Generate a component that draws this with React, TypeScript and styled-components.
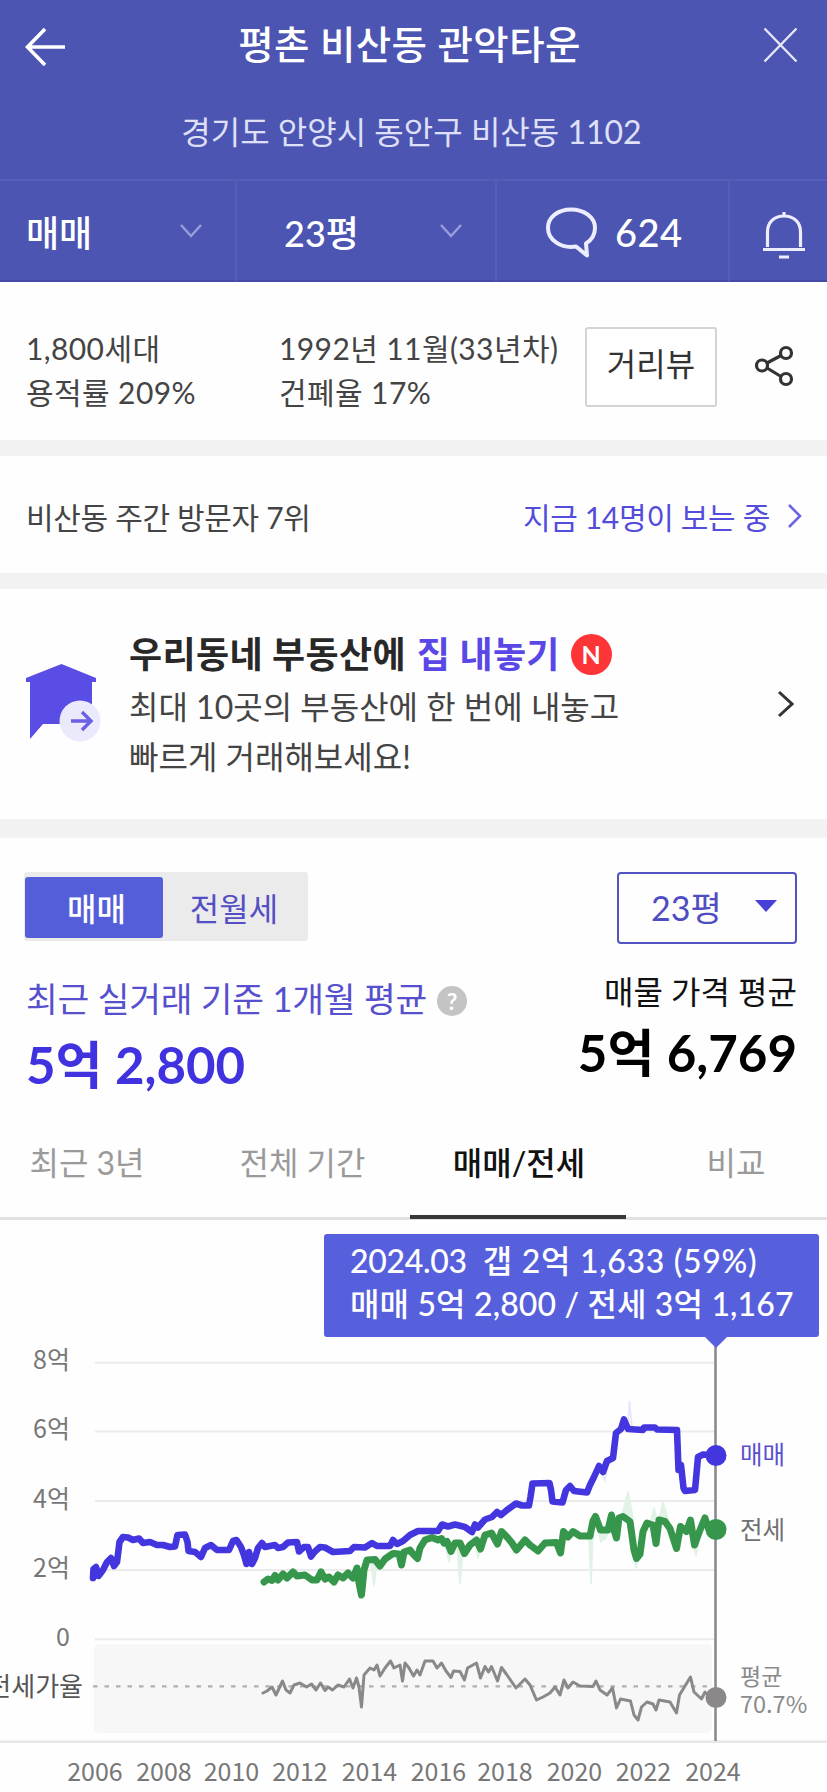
import React from "react";
import styled, { createGlobalStyle } from "styled-components";

const Global = createGlobalStyle`
  * { box-sizing: border-box; }
  body {
    margin: 0;
    background: #fefefe;
    font-family: Lato, "Noto Sans CJK KR", sans-serif;
    color: #444;
  }
`;

const Page = styled.main`
  width: 827px;
  height: 1792px;
  overflow: hidden;
  display: flex;
  flex-direction: column;
  background: #fefefe;
  white-space: nowrap;
`;

const Header = styled.header`
  height: 282px;
  flex: none;
  background: #4c55b2;
  color: #fff;
  border-bottom: 2px solid #444ba6;
`;

const TitleRow = styled.div`
  height: 90px;
  display: flex;
  align-items: center;
  justify-content: space-between;
  padding: 0 29px 0 25px;
`;

const Title = styled.h1`
  margin: 0 9px 2px 0;
  font-size: 38.5px;
  line-height: 50px;
  font-weight: 500;
  letter-spacing: 0.4px;
`;

const Address = styled.div`
  height: 89px;
  display: flex;
  align-items: center;
  justify-content: center;
  padding-bottom: 9px;
  padding-right: 4px;
  font-size: 32px;
  color: #dfe0f8;
`;

const FilterBar = styled.div`
  height: 102px;
  display: grid;
  grid-template-columns: 237px 260px 233px 97px;
  border-top: 2px solid #565eb8;
`;

const Filter = styled.div<{ $start: number; $end?: number }>`
  display: flex;
  align-items: center;
  justify-content: space-between;
  padding: 0 ${(p) => p.$end ?? 0}px 0 ${(p) => p.$start}px;
  font-size: 36px;
  font-weight: 500;
  border-right: 2px solid #555db7;
  &:last-child {
    border-right: 0;
  }
`;

const FilterIcon = styled.svg<{ $drop: number }>`
  margin-top: ${(p) => p.$drop}px;
  flex: none;
`;

const Count = styled.span`
  flex: 1;
  padding: 2px 0 0 17px;
  font-size: 38px;
  letter-spacing: 0.4px;
`;

const Gap = styled.div<{ $h: number }>`
  height: ${(p) => p.$h}px;
  flex: none;
  background: #f2f2f2;
`;

const Info = styled.section`
  height: 158px;
  flex: none;
  display: flex;
  align-items: flex-start;
  padding: 45px 0 0 26px;
  font-size: 30px;
  line-height: 44px;
`;

const InfoColumn = styled.div<{ $w: number }>`
  width: ${(p) => p.$w}px;
  margin-top: -1px;
  letter-spacing: 0.4px;
`;

const StreetButton = styled.button`
  width: 132px;
  height: 80px;
  padding: 0 0 6px;
  border: 2px solid #d4d4d4;
  border-radius: 3px;
  background: #fff;
  color: #333;
  font: inherit;
  font-size: 32px;
`;

const ShareIcon = styled.svg`
  margin: 17px 0 0 36px;
`;

const Visitors = styled.section`
  height: 117px;
  flex: none;
  display: flex;
  align-items: center;
  justify-content: space-between;
  padding: 2px 25px 0 26px;
  font-size: 30px;
  letter-spacing: -0.33px;
`;

const Viewing = styled.span`
  display: flex;
  align-items: center;
  gap: 17px;
  color: #544cdb;
`;

const Promo = styled.section`
  height: 230px;
  flex: none;
  display: flex;
  align-items: flex-start;
  padding: 40px 33px 0 26px;
`;

const PromoIcon = styled.svg`
  margin: 34px 28px 0 0;
  flex: none;
`;

const PromoBody = styled.div`
  flex: 1;
  font-size: 32px;
  line-height: 50px;
`;

const PromoTitle = styled.h2`
  margin: 0;
  display: flex;
  align-items: center;
  font-size: 36px;
  line-height: 50px;
  font-weight: 700;
  letter-spacing: 0.35px;
  color: #282828;
  padding-bottom: 3px;
  height: 53px;
`;

const Accent = styled.span`
  color: #5a48e6;
  margin-left: 11px;
`;

const NewBadge = styled.span`
  width: 41px;
  height: 41px;
  margin-left: 11px;
  border-radius: 50%;
  background: #fd3536;
  color: #fff;
  font-size: 25px;
  line-height: 41px;
  text-align: center;
`;

const PromoArrow = styled.svg`
  margin-top: 61px;
`;

const Price = styled.section`
  height: 297px;
  flex: none;
  padding: 34px 30px 0 24px;
`;

const Line = styled.div`
  display: flex;
  justify-content: space-between;
  align-items: flex-start;
`;

const Toggle = styled.div`
  width: 284px;
  height: 69px;
  padding: 5px 0 3px 1px;
  display: flex;
  background: #ebebec;
  border-radius: 3px;
  font-size: 32px;
`;

const ToggleItem = styled.div<{ $active?: boolean }>`
  width: ${(p) => (p.$active ? 138 : 144)}px;
  padding: 0 ${(p) => (p.$active ? 0 : 2)}px 1px ${(p) => (p.$active ? 5 : 0)}px;
  display: flex;
  align-items: center;
  justify-content: center;
  border-radius: 3px;
  background: ${(p) => (p.$active ? "#555ed9" : "transparent")};
  color: ${(p) => (p.$active ? "#fff" : "#544fc4")};
  font-weight: ${(p) => (p.$active ? 500 : 400)};
`;

const Select = styled.div`
  width: 180px;
  height: 72px;
  display: flex;
  align-items: center;
  justify-content: space-between;
  padding: 0 18px 4px 32px;
  border: 2px solid #5055c0;
  border-radius: 4px;
  color: #4f4dc4;
  font-size: 34px;
`;

const Average = styled.div<{ $right?: boolean }>`
  display: flex;
  flex-direction: column;
  align-items: ${(p) => (p.$right ? "flex-end" : "flex-start")};
  padding-top: ${(p) => (p.$right ? 28 : 35)}px;
  padding-left: ${(p) => (p.$right ? 0 : 2)}px;
  color: ${(p) => (p.$right ? "#111" : "#5650cf")};
  font-size: ${(p) => (p.$right ? 32 : 34.5)}px;
  line-height: 40px;
`;

const AverageLabel = styled.div<{ $track?: number }>`
  display: flex;
  align-items: center;
  gap: 10px;
  letter-spacing: ${(p) => p.$track ?? 0}px;
`;

const Help = styled.span`
  width: 30px;
  height: 30px;
  margin-top: 3px;
  border-radius: 50%;
  background: #c4c4c4;
  color: #fff;
  font-size: 23px;
  line-height: 30px;
  font-weight: 700;
  text-align: center;
`;

const Amount = styled.strong<{ $blue?: boolean }>`
  margin-top: ${(p) => (p.$blue ? 16 : 11)}px;
  font-size: 51px;
  line-height: 60px;
  font-weight: 700;
  color: ${(p) => (p.$blue ? "#4033df" : "#000")};
`;

const Tabs = styled.nav`
  height: 85px;
  flex: none;
  display: grid;
  grid-template-columns: 195px 215px 216px 201px;
  border-bottom: 3px solid #e2e2e2;
  font-size: 32px;
`;

const Tab = styled.div<{ $active?: boolean; $left?: number; $right?: number }>`
  display: flex;
  align-items: flex-start;
  justify-content: center;
  height: 84px;
  padding: 6px ${(p) => p.$right ?? 0}px 0 ${(p) => p.$left ?? 0}px;
  line-height: 44px;
  color: ${(p) => (p.$active ? "#111" : "#9a9a9a")};
  font-weight: ${(p) => (p.$active ? 500 : 400)};
  border-bottom: 4px solid ${(p) => (p.$active ? "#3a3738" : "transparent")};
`;

const ChartArea = styled.section`
  position: relative;
  height: 572px;
  flex: none;
`;

const Tooltip = styled.div`
  position: absolute;
  left: 324px;
  top: 14px;
  width: 495px;
  height: 103px;
  padding: 5px 0 0 26px;
  border-radius: 3px;
  background: #5760dc;
  color: #fff;
  font-size: 32px;
  line-height: 43px;
  font-weight: 500;
  &::after {
    content: "";
    position: absolute;
    left: 380px;
    top: 102px;
    border: 12px solid transparent;
    border-top-color: #5760dc;
    border-bottom: 0;
  }
`;

const TooltipLine = styled.div`
  display: flex;
  gap: 16px;
  letter-spacing: 0.15px;
`;

const TooltipDate = styled.span`
  letter-spacing: -0.3px;
`;

const TooltipGap = styled.span`
  letter-spacing: 0.7px;
`;

const ChartSvg = styled.svg`
  display: block;
  font-family: "Noto Sans CJK KR", sans-serif;
  font-size: 25px;
  fill: #777;
`;

const Chevron = ({ color, w, h, stroke }: { color: string; w: number; h: number; stroke: number }) => (
  <svg width={w} height={h} fill="none" stroke={color} strokeWidth={stroke}>
    <path d={`M2 2L${w - 2} ${h / 2}L2 ${h - 2}`} />
  </svg>
);

const DownChevron = () => (
  <svg width="24" height="16" fill="none" stroke="#9a9edb" strokeWidth="2.4">
    <path d="M2 2L12 13L22 2" />
  </svg>
);

const salePoints =
  "93,1578 93.5,1569 96,1567 98.5,1576 103,1570 107,1562 111,1558 114,1566 117,1562 119.5,1542 123,1537 128,1537.5 133,1540 139,1538.5 143,1543 150,1542 157,1545 163,1545 170,1547 175,1546.5 177.5,1535 185,1534.5 187.5,1542 188.5,1551 195,1552 201,1557 205,1548 211,1545 217,1550 229,1550 233,1541 236.5,1540 241,1547 244,1555 246.5,1564 249,1552 252,1564 255,1558 258,1548 262,1543 265,1547 275,1545 278,1548 283,1547 288,1542.5 297,1542 299,1551.5 304,1547 308,1547 311,1556.5 315,1551.5 320,1547 325,1547.5 333,1552 350,1551 354,1547 365,1547.5 372,1543 377,1546 390,1546 393,1540 397,1544 403,1541 410,1535 418,1531 438,1531 442,1524.5 448,1526.5 455,1524.5 465,1527 472,1532 475,1524.5 478,1527.5 485,1519.5 492,1517 497,1512 501,1515 507,1510 516,1503.5 522,1505.5 529,1505.5 530.5,1497 532.5,1483.5 549.5,1483 551,1490 552.5,1501.5 562.5,1502.5 566,1490 570,1486 574,1491 587,1492.5 590,1485 594,1477 599,1466 603,1472 607,1461 613,1458 616,1433 621,1429 624,1419.5 628,1429 643,1430 644,1427.5 655,1427.5 657,1429.5 677,1430 678.5,1470 681,1465 683.5,1488 685,1491 695,1490 698,1457 703,1454.5 715.5,1455.5";

const leasePoints =
  "264,1582 268,1579 272,1580.5 275,1575.5 278,1580 283,1574 287,1578 293,1572 297,1576 305,1575 312,1580 317,1580 321,1572 325,1579 329,1577 334,1582 338,1575 343,1578 348,1573 353,1578 357,1568 359,1583 361.5,1595 364,1570 367,1560 375,1559.5 380,1566 385,1559 393,1553.5 399,1554 401.5,1565 404,1552 410,1550 413,1554 417.5,1558.5 420,1548 425,1540 432,1537.5 438,1540 441.5,1538.5 444,1543 447,1541.5 451,1551.5 455,1543 460,1543 464.5,1553.5 470,1545 476.5,1540 480.5,1549 485,1535 491.5,1533 497.5,1544 501.5,1531.5 507,1537 512,1543 516.5,1550 525,1540 530,1545 538,1551 545,1543 556.5,1542.5 560.5,1553 563.5,1531.5 568,1537 573,1531.5 580,1536 590,1536 593,1521 595.5,1516.5 600.5,1530 608,1530 611.5,1515 614,1530 616.5,1538 619,1518 623,1516.5 630,1521.5 634,1550 636.5,1558.5 640,1554 643,1531.5 647,1523 653,1525 656,1543.5 659,1520 665,1521.5 670,1528.5 676.5,1548.5 680.5,1526.5 686.5,1531.5 690.5,1520 694.5,1545 699,1532.5 705,1518 709,1530 715.5,1529";

const ratioPoints =
  "263,1693 267,1691 272,1687 276,1695 282.5,1681 286,1690 290,1693 294,1685 300,1683 306.5,1687 311.5,1684 316,1690 320.5,1683 325,1690.5 328,1687 332.5,1690 338,1685 344,1687 349.5,1679 353,1688 356.5,1678 359,1687 361.5,1707 364,1675 370,1668 374,1670 377,1665 380,1676 385,1668 390.5,1661 394,1668 400,1665 402.5,1681 405,1663 409,1668 413.5,1676 417,1670 420,1675 425,1661 433,1661 437,1668 441.5,1663 446,1671 451,1677.5 453.5,1671 460,1671.5 464.5,1680 467.5,1668 476.5,1663 480.5,1678 485,1666.5 488.5,1672 491.5,1666.5 497.5,1681 501.5,1667.5 507,1675 516,1688 525,1679 530,1685 536.5,1700 543,1697 550,1693 555,1687 560,1695 564,1680 568,1688 573,1682 580,1686 593,1686.5 596,1681 600,1690 607,1695 612.5,1688 616.5,1708 620.5,1699 630.5,1701 634,1715 638,1720 641.5,1707 647,1702 653,1704 656,1710 659,1700 670,1702 676.5,1713 679.5,1695 690.5,1677 694,1692 701.5,1699 705,1692 710,1697 715.5,1697.5";

const gridLines = [
  { label: "8억", y: 1362.7 },
  { label: "6억", y: 1431.5 },
  { label: "4억", y: 1501 },
  { label: "2억", y: 1570 },
  { label: "0", y: 1639.3 },
];

const years = [
  [2006, 95], [2008, 164], [2010, 231.5], [2012, 300], [2014, 369.5],
  [2016, 438.5], [2018, 505], [2020, 574.5], [2022, 643.5], [2024, 713],
];

const Chart = () => (
  <ChartSvg width="827" height="572" viewBox="0 1220 827 572">
    <rect x="94" y="1644" width="618" height="89" rx="5" fill="#f7f7f7" />
    {gridLines.map(({ label, y }) => (
      <g key={label}>
        <path d={`M95 ${y}H715`} stroke="#ebebeb" strokeWidth="2" />
        <text x="70" y={y + 6.5} textAnchor="end">{label}</text>
      </g>
    ))}
    <path d="M93 1686.3H711" stroke="#b0b0b0" strokeWidth="2.2" strokeDasharray="4.5 7" />
    <path d="M0 1741.7H827" stroke="#e6e6e8" strokeWidth="2.4" />
    <path
      d="M371 1562L374 1586L377 1562M445 1545L449 1562L452 1548M457 1545L460 1584L463 1550M476 1547L478 1558L481 1548M589 1538L591 1584L593 1532M598 1530L601 1542L606 1538L609 1530M622 1515L628 1492L633 1518M633 1550L636 1568L639 1555M651 1520L654 1508L657 1520M659 1520L663 1502L669 1522M692 1540L696 1556L699 1538"
      fill="#e1f2e6" stroke="#e1f2e6" strokeWidth="1.6"
    />
    <path d="M628 1428L629.5 1401L632 1428M600 1468L605 1480L608 1465" fill="none" stroke="#e8e6fa" strokeWidth="1.8" />
    <g fill="none" strokeLinejoin="round" strokeLinecap="round">
      <polyline points={ratioPoints} stroke="#898989" strokeWidth="3" />
      <polyline points={leasePoints} stroke="#36964c" strokeWidth="7" />
      <polyline points={salePoints} stroke="#4336df" strokeWidth="6.6" />
    </g>
    <path d="M715.5 1340V1741" stroke="#8b8b8b" strokeWidth="2.6" />
    <circle cx="716" cy="1455.5" r="10.5" fill="#4336df" />
    <circle cx="716" cy="1529.5" r="10.5" fill="#36964c" />
    <circle cx="716" cy="1697.5" r="10.5" fill="#8b8889" />
    <text x="83" y="1695.500" fontSize="26" textAnchor="end" fill="#555">전세가율</text>
    <g fontSize="24.500">
      <text x="740" y="1464" fill="#5a50cf">매매</text>
      <text x="740" y="1538.500" fill="#707070">전세</text>
      <text x="740" y="1685" fill="#8a8a8a" fontSize="23">평균</text>
      <text x="740" y="1712.500" fill="#8a8a8a" fontSize="23.500">70.7%</text>
    </g>
    {years.map(([year, x]) => (
      <text key={year} x={x} y="1781" textAnchor="middle">{year}</text>
    ))}
  </ChartSvg>
);

export default function App() {
  return (
    <Page>
      <Global />
      <Header>
        <TitleRow>
          <svg width="40" height="42" fill="none" stroke="#fff" strokeWidth="3.6">
            <path d="M40 23H3M20 5L2.5 23L20 41" />
          </svg>
          <Title>평촌 비산동 관악타운</Title>
          <svg width="35" height="36" fill="none" stroke="#e6e7fa" strokeWidth="2.4">
            <path d="M1.5 1.5L33.5 34.5M33.5 1.5L1.5 34.5" />
          </svg>
        </TitleRow>
        <Address>경기도 안양시 동안구 비산동 1102</Address>
        <FilterBar>
          <Filter $start={26} $end={32}>매매<DownChevron /></Filter>
          <Filter $start={47} $end={32}>23평<DownChevron /></Filter>
          <Filter $start={48}>
            <FilterIcon $drop={3} width="53" height="52" fill="none" stroke="#eceeff" strokeWidth="4" strokeLinejoin="round">
              <path d="M31 39.5C16 42 3 33 3 21C3 10 13 2.5 26 2.5S50 10 50 21C50 28 46.500 33 41 36.500L42 48.500Z" />
            </FilterIcon>
            <Count>624</Count>
          </Filter>
          <Filter $start={32}>
            <FilterIcon $drop={8} width="44" height="48" fill="none" stroke="#eceeff" strokeWidth="3.2">
              <path d="M22 1V6M5.500 36V21C5.500 11.500 12 5 22 5S38.500 11.500 38.500 21V36M1 38.500H43M17 46H27" />
            </FilterIcon>
          </Filter>
        </FilterBar>
      </Header>

      <Info>
        <InfoColumn $w={253}>1,800세대<br />용적률 209%</InfoColumn>
        <InfoColumn $w={306}>1992년 11월(33년차)<br />건폐율 17%</InfoColumn>
        <StreetButton>거리뷰</StreetButton>
        <ShareIcon width="42" height="44" fill="none" stroke="#333" strokeWidth="3.2">
          <circle cx="9" cy="21.500" r="5.500" />
          <circle cx="33" cy="9" r="5.500" />
          <circle cx="33" cy="35" r="5.500" />
          <path d="M14 19L28 11.500M14 24L28 32.500" />
        </ShareIcon>
      </Info>
      <Gap $h={16} />

      <Visitors>
        <span>비산동 주간 방문자 7위</span>
        <Viewing>
          지금 14명이 보는 중
          <Chevron color="#6b66dd" w={15} h={26} stroke={2.6} />
        </Viewing>
      </Visitors>
      <Gap $h={16} />

      <Promo>
        <PromoIcon width="75" height="80" viewBox="0 0 75 80">
          <path d="M35.500 1L70 15V19H66V61H17L4 76V19H0V15Z" fill="#5a4de6" />
          <circle cx="54" cy="58" r="20.500" fill="#ebeafd" />
          <path d="M45 58H64M56 49L65 58L56 67" fill="none" stroke="#6b5fe6" strokeWidth="3.400" />
        </PromoIcon>
        <PromoBody>
          <PromoTitle>
            우리동네 부동산에<Accent>집 내놓기</Accent><NewBadge>N</NewBadge>
          </PromoTitle>
          최대 10곳의 부동산에 한 번에 내놓고<br />
          빠르게 거래해보세요!
        </PromoBody>
        <PromoArrow width="17" height="28" fill="none" stroke="#333" strokeWidth="3">
          <path d="M2 2L15 14L2 26" />
        </PromoArrow>
      </Promo>
      <Gap $h={19} />

      <Price>
        <Line>
          <Toggle>
            <ToggleItem $active>매매</ToggleItem>
            <ToggleItem>전월세</ToggleItem>
          </Toggle>
          <Select>
            23평
            <svg width="22" height="12"><path d="M0 0H22L11 12Z" fill="#4640d6" /></svg>
          </Select>
        </Line>
        <Line>
          <Average>
            <AverageLabel $track={-0.22}>최근 실거래 기준 1개월 평균<Help>?</Help></AverageLabel>
            <Amount $blue>5억 2,800</Amount>
          </Average>
          <Average $right>
            <AverageLabel>매물 가격 평균</AverageLabel>
            <Amount>5억 6,769</Amount>
          </Average>
        </Line>
      </Price>

      <Tabs>
        <Tab $right={21}>최근 3년</Tab>
        <Tab>전체 기간</Tab>
        <Tab $active $left={2}>매매/전세</Tab>
        <Tab $left={19}>비교</Tab>
      </Tabs>

      <ChartArea>
        <Chart />
        <Tooltip>
          <TooltipLine>
            <TooltipDate>2024.03</TooltipDate>
            <TooltipGap>갭 2억 1,633 (59%)</TooltipGap>
          </TooltipLine>
          <TooltipLine>매매 5억 2,800 / 전세 3억 1,167</TooltipLine>
        </Tooltip>
      </ChartArea>
    </Page>
  );
}
